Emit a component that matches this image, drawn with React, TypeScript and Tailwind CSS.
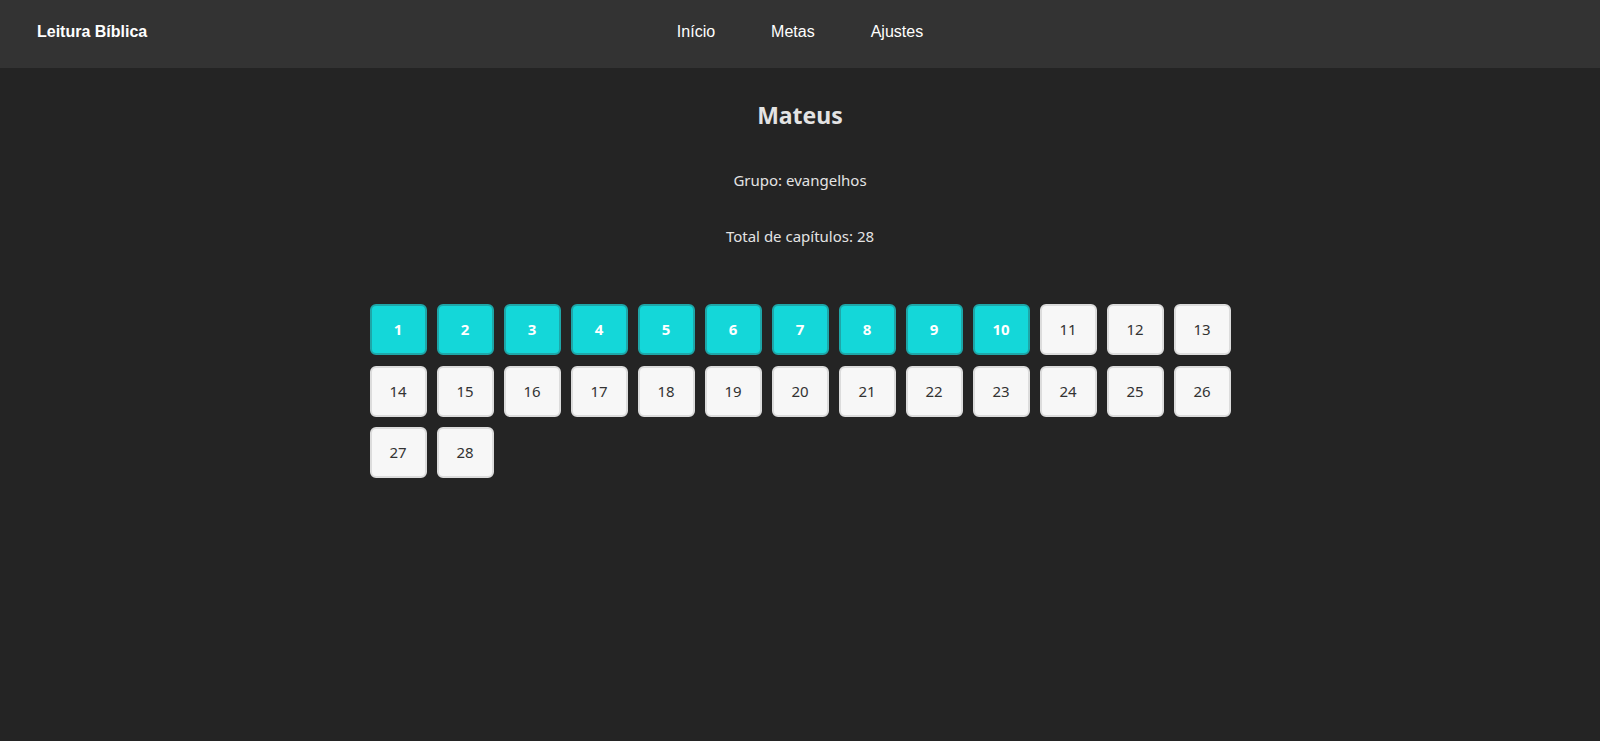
import React from "react";

const chapters = Array.from({ length: 28 }, (_, i) => i + 1);
const read = 10;

export default function App() {
  return (
    <div className="min-h-screen w-full bg-[#242424]">
      <header className="w-full bg-[#333333]">
        <div className="grid h-[68px] w-full grid-cols-[1fr_auto_1fr] items-center pb-[5px] font-['Liberation_Sans',Arial,sans-serif] text-[16px] text-white">
          <div className="pl-[37px] font-bold">Leitura Bíblica</div>
          <nav className="flex gap-[56px]">
            <span>Início</span>
            <span>Metas</span>
            <span>Ajustes</span>
          </nav>
          <div />
        </div>
      </header>
      <main className="flex w-full flex-col items-center pt-[31px] font-['Noto_Sans','Open_Sans',sans-serif] text-[#e3e3e3]">
        <h2 className="h-[32px] text-[23px] font-bold leading-[32px]">Mateus</h2>
        <p className="mt-[37px] h-[24px] text-[15px] leading-[24px]">Grupo: evangelhos</p>
        <p className="mt-[32px] h-[24px] text-[15px] leading-[24px]">Total de capítulos: 28</p>
        <div className="mt-[56px] grid grid-cols-[repeat(13,57px)] gap-x-[10px] gap-y-[10.5px]">
          {chapters.map((c) =>
            c <= read ? (
              <div
                key={c}
                className="flex h-[51px] w-[57px] items-center justify-center rounded-[6px] border-2 border-[#1ea6a8] bg-[#14d7d9] text-[15px] font-bold text-white"
              >
                {c}
              </div>
            ) : (
              <div
                key={c}
                className="flex h-[51px] w-[57px] items-center justify-center rounded-[6px] border-2 border-[#dcdcdc] bg-[#f7f7f7] text-[15px] text-[#333333]"
              >
                {c}
              </div>
            )
          )}
        </div>
      </main>
    </div>
  );
}
